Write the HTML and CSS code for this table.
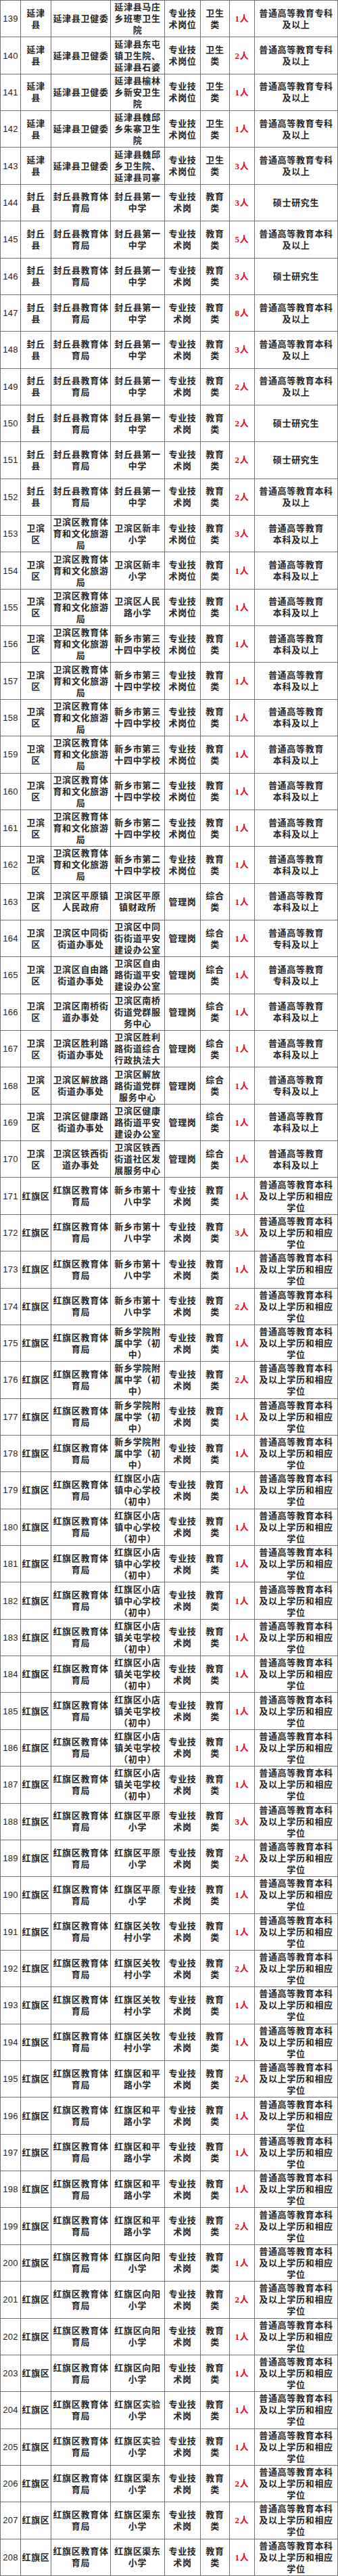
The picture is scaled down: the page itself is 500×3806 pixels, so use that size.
FILE: index.html
```html
<!DOCTYPE html>
<html lang="zh-CN">
<head>
<meta charset="utf-8">
<title>招聘岗位表</title>
<link rel="stylesheet" href="styles.css">
</head>
<body>
<div class="sheet">
<div>139</div><div>延津<br>县</div><div>延津县卫健委</div><div>延津县马庄<br>乡班枣卫生<br>院</div><div>专业技<br>术岗位</div><div>卫生<br>类</div><div>1人</div><div>普通高等教育专科<br>及以上</div>
<div>140</div><div>延津<br>县</div><div>延津县卫健委</div><div>延津县东屯<br>镇卫生院、<br>延津县石婆</div><div>专业技<br>术岗位</div><div>卫生<br>类</div><div>2人</div><div>普通高等教育专科<br>及以上</div>
<div>141</div><div>延津<br>县</div><div>延津县卫健委</div><div>延津县榆林<br>乡新安卫生<br>院</div><div>专业技<br>术岗位</div><div>卫生<br>类</div><div>1人</div><div>普通高等教育专科<br>及以上</div>
<div>142</div><div>延津<br>县</div><div>延津县卫健委</div><div>延津县魏邱<br>乡朱寨卫生<br>院</div><div>专业技<br>术岗位</div><div>卫生<br>类</div><div>1人</div><div>普通高等教育专科<br>及以上</div>
<div>143</div><div>延津<br>县</div><div>延津县卫健委</div><div>延津县魏邱<br>乡卫生院、<br>延津县司寨</div><div>专业技<br>术岗位</div><div>卫生<br>类</div><div>3人</div><div>普通高等教育专科<br>及以上</div>
<div>144</div><div>封丘<br>县</div><div>封丘县教育体<br>育局</div><div>封丘县第一<br>中学</div><div>专业技<br>术岗</div><div>教育<br>类</div><div>3人</div><div>硕士研究生</div>
<div>145</div><div>封丘<br>县</div><div>封丘县教育体<br>育局</div><div>封丘县第一<br>中学</div><div>专业技<br>术岗</div><div>教育<br>类</div><div>5人</div><div>普通高等教育本科<br>及以上</div>
<div>146</div><div>封丘<br>县</div><div>封丘县教育体<br>育局</div><div>封丘县第一<br>中学</div><div>专业技<br>术岗</div><div>教育<br>类</div><div>3人</div><div>硕士研究生</div>
<div>147</div><div>封丘<br>县</div><div>封丘县教育体<br>育局</div><div>封丘县第一<br>中学</div><div>专业技<br>术岗</div><div>教育<br>类</div><div>8人</div><div>普通高等教育本科<br>及以上</div>
<div>148</div><div>封丘<br>县</div><div>封丘县教育体<br>育局</div><div>封丘县第一<br>中学</div><div>专业技<br>术岗</div><div>教育<br>类</div><div>3人</div><div>普通高等教育本科<br>及以上</div>
<div>149</div><div>封丘<br>县</div><div>封丘县教育体<br>育局</div><div>封丘县第一<br>中学</div><div>专业技<br>术岗</div><div>教育<br>类</div><div>2人</div><div>普通高等教育本科<br>及以上</div>
<div>150</div><div>封丘<br>县</div><div>封丘县教育体<br>育局</div><div>封丘县第一<br>中学</div><div>专业技<br>术岗</div><div>教育<br>类</div><div>2人</div><div>硕士研究生</div>
<div>151</div><div>封丘<br>县</div><div>封丘县教育体<br>育局</div><div>封丘县第一<br>中学</div><div>专业技<br>术岗</div><div>教育<br>类</div><div>2人</div><div>硕士研究生</div>
<div>152</div><div>封丘<br>县</div><div>封丘县教育体<br>育局</div><div>封丘县第一<br>中学</div><div>专业技<br>术岗</div><div>教育<br>类</div><div>2人</div><div>普通高等教育本科<br>及以上</div>
<div>153</div><div>卫滨<br>区</div><div>卫滨区教育体<br>育和文化旅游<br>局</div><div>卫滨区新丰<br>小学</div><div>专业技<br>术岗位</div><div>教育<br>类</div><div>3人</div><div>普通高等教育<br>本科及以上</div>
<div>154</div><div>卫滨<br>区</div><div>卫滨区教育体<br>育和文化旅游<br>局</div><div>卫滨区新丰<br>小学</div><div>专业技<br>术岗位</div><div>教育<br>类</div><div>1人</div><div>普通高等教育<br>本科及以上</div>
<div>155</div><div>卫滨<br>区</div><div>卫滨区教育体<br>育和文化旅游<br>局</div><div>卫滨区人民<br>路小学</div><div>专业技<br>术岗位</div><div>教育<br>类</div><div>1人</div><div>普通高等教育<br>本科及以上</div>
<div>156</div><div>卫滨<br>区</div><div>卫滨区教育体<br>育和文化旅游<br>局</div><div>新乡市第三<br>十四中学校</div><div>专业技<br>术岗位</div><div>教育<br>类</div><div>1人</div><div>普通高等教育<br>本科及以上</div>
<div>157</div><div>卫滨<br>区</div><div>卫滨区教育体<br>育和文化旅游<br>局</div><div>新乡市第三<br>十四中学校</div><div>专业技<br>术岗位</div><div>教育<br>类</div><div>1人</div><div>普通高等教育<br>本科及以上</div>
<div>158</div><div>卫滨<br>区</div><div>卫滨区教育体<br>育和文化旅游<br>局</div><div>新乡市第三<br>十四中学校</div><div>专业技<br>术岗位</div><div>教育<br>类</div><div>1人</div><div>普通高等教育<br>本科及以上</div>
<div>159</div><div>卫滨<br>区</div><div>卫滨区教育体<br>育和文化旅游<br>局</div><div>新乡市第三<br>十四中学校</div><div>专业技<br>术岗位</div><div>教育<br>类</div><div>1人</div><div>普通高等教育<br>本科及以上</div>
<div>160</div><div>卫滨<br>区</div><div>卫滨区教育体<br>育和文化旅游<br>局</div><div>新乡市第二<br>十四中学校</div><div>专业技<br>术岗位</div><div>教育<br>类</div><div>1人</div><div>普通高等教育<br>本科及以上</div>
<div>161</div><div>卫滨<br>区</div><div>卫滨区教育体<br>育和文化旅游<br>局</div><div>新乡市第二<br>十四中学校</div><div>专业技<br>术岗位</div><div>教育<br>类</div><div>1人</div><div>普通高等教育<br>本科及以上</div>
<div>162</div><div>卫滨<br>区</div><div>卫滨区教育体<br>育和文化旅游<br>局</div><div>新乡市第二<br>十四中学校</div><div>专业技<br>术岗位</div><div>教育<br>类</div><div>1人</div><div>普通高等教育<br>本科及以上</div>
<div>163</div><div>卫滨<br>区</div><div>卫滨区平原镇<br>人民政府</div><div>卫滨区平原<br>镇财政所</div><div>管理岗</div><div>综合<br>类</div><div>1人</div><div>普通高等教育<br>本科及以上</div>
<div>164</div><div>卫滨<br>区</div><div>卫滨区中同街<br>街道办事处</div><div>卫滨区中同<br>街街道平安<br>建设办公室</div><div>管理岗</div><div>综合<br>类</div><div>1人</div><div>普通高等教育<br>专科及以上</div>
<div>165</div><div>卫滨<br>区</div><div>卫滨区自由路<br>街道办事处</div><div>卫滨区自由<br>路街道平安<br>建设办公室</div><div>管理岗</div><div>综合<br>类</div><div>1人</div><div>普通高等教育<br>专科及以上</div>
<div>166</div><div>卫滨<br>区</div><div>卫滨区南桥街<br>道办事处</div><div>卫滨区南桥<br>街道党群服<br>务中心</div><div>管理岗</div><div>综合<br>类</div><div>1人</div><div>普通高等教育<br>本科及以上</div>
<div>167</div><div>卫滨<br>区</div><div>卫滨区胜利路<br>街道办事处</div><div>卫滨区胜利<br>路街道综合<br>行政执法大</div><div>管理岗</div><div>综合<br>类</div><div>1人</div><div>普通高等教育<br>本科及以上</div>
<div>168</div><div>卫滨<br>区</div><div>卫滨区解放路<br>街道办事处</div><div>卫滨区解放<br>路街道党群<br>服务中心</div><div>管理岗</div><div>综合<br>类</div><div>1人</div><div>普通高等教育<br>专科及以上</div>
<div>169</div><div>卫滨<br>区</div><div>卫滨区健康路<br>街道办事处</div><div>卫滨区健康<br>路街道平安<br>建设办公室</div><div>管理岗</div><div>综合<br>类</div><div>1人</div><div>普通高等教育<br>本科及以上</div>
<div>170</div><div>卫滨<br>区</div><div>卫滨区铁西街<br>道办事处</div><div>卫滨区铁西<br>街道社区发<br>展服务中心</div><div>管理岗</div><div>综合<br>类</div><div>1人</div><div>普通高等教育<br>本科及以上</div>
<div>171</div><div>红旗区</div><div>红旗区教育体<br>育局</div><div>新乡市第十<br>八中学</div><div>专业技<br>术岗</div><div>教育<br>类</div><div>1人</div><div>普通高等教育本科<br>及以上学历和相应<br>学位</div>
<div>172</div><div>红旗区</div><div>红旗区教育体<br>育局</div><div>新乡市第十<br>八中学</div><div>专业技<br>术岗</div><div>教育<br>类</div><div>3人</div><div>普通高等教育本科<br>及以上学历和相应<br>学位</div>
<div>173</div><div>红旗区</div><div>红旗区教育体<br>育局</div><div>新乡市第十<br>八中学</div><div>专业技<br>术岗</div><div>教育<br>类</div><div>1人</div><div>普通高等教育本科<br>及以上学历和相应<br>学位</div>
<div>174</div><div>红旗区</div><div>红旗区教育体<br>育局</div><div>新乡市第十<br>八中学</div><div>专业技<br>术岗</div><div>教育<br>类</div><div>2人</div><div>普通高等教育本科<br>及以上学历和相应<br>学位</div>
<div>175</div><div>红旗区</div><div>红旗区教育体<br>育局</div><div>新乡学院附<br>属中学（初<br>中）</div><div>专业技<br>术岗</div><div>教育<br>类</div><div>1人</div><div>普通高等教育本科<br>及以上学历和相应<br>学位</div>
<div>176</div><div>红旗区</div><div>红旗区教育体<br>育局</div><div>新乡学院附<br>属中学（初<br>中）</div><div>专业技<br>术岗</div><div>教育<br>类</div><div>2人</div><div>普通高等教育本科<br>及以上学历和相应<br>学位</div>
<div>177</div><div>红旗区</div><div>红旗区教育体<br>育局</div><div>新乡学院附<br>属中学（初<br>中）</div><div>专业技<br>术岗</div><div>教育<br>类</div><div>1人</div><div>普通高等教育本科<br>及以上学历和相应<br>学位</div>
<div>178</div><div>红旗区</div><div>红旗区教育体<br>育局</div><div>新乡学院附<br>属中学（初<br>中）</div><div>专业技<br>术岗</div><div>教育<br>类</div><div>1人</div><div>普通高等教育本科<br>及以上学历和相应<br>学位</div>
<div>179</div><div>红旗区</div><div>红旗区教育体<br>育局</div><div>红旗区小店<br>镇中心学校<br>（初中）</div><div>专业技<br>术岗</div><div>教育<br>类</div><div>1人</div><div>普通高等教育本科<br>及以上学历和相应<br>学位</div>
<div>180</div><div>红旗区</div><div>红旗区教育体<br>育局</div><div>红旗区小店<br>镇中心学校<br>（初中）</div><div>专业技<br>术岗</div><div>教育<br>类</div><div>1人</div><div>普通高等教育本科<br>及以上学历和相应<br>学位</div>
<div>181</div><div>红旗区</div><div>红旗区教育体<br>育局</div><div>红旗区小店<br>镇中心学校<br>（初中）</div><div>专业技<br>术岗</div><div>教育<br>类</div><div>1人</div><div>普通高等教育本科<br>及以上学历和相应<br>学位</div>
<div>182</div><div>红旗区</div><div>红旗区教育体<br>育局</div><div>红旗区小店<br>镇中心学校<br>（初中）</div><div>专业技<br>术岗</div><div>教育<br>类</div><div>1人</div><div>普通高等教育本科<br>及以上学历和相应<br>学位</div>
<div>183</div><div>红旗区</div><div>红旗区教育体<br>育局</div><div>红旗区小店<br>镇关屯学校<br>（初中）</div><div>专业技<br>术岗</div><div>教育<br>类</div><div>1人</div><div>普通高等教育本科<br>及以上学历和相应<br>学位</div>
<div>184</div><div>红旗区</div><div>红旗区教育体<br>育局</div><div>红旗区小店<br>镇关屯学校<br>（初中）</div><div>专业技<br>术岗</div><div>教育<br>类</div><div>1人</div><div>普通高等教育本科<br>及以上学历和相应<br>学位</div>
<div>185</div><div>红旗区</div><div>红旗区教育体<br>育局</div><div>红旗区小店<br>镇关屯学校<br>（初中）</div><div>专业技<br>术岗</div><div>教育<br>类</div><div>1人</div><div>普通高等教育本科<br>及以上学历和相应<br>学位</div>
<div>186</div><div>红旗区</div><div>红旗区教育体<br>育局</div><div>红旗区小店<br>镇关屯学校<br>（初中）</div><div>专业技<br>术岗</div><div>教育<br>类</div><div>1人</div><div>普通高等教育本科<br>及以上学历和相应<br>学位</div>
<div>187</div><div>红旗区</div><div>红旗区教育体<br>育局</div><div>红旗区小店<br>镇关屯学校<br>（初中）</div><div>专业技<br>术岗</div><div>教育<br>类</div><div>1人</div><div>普通高等教育本科<br>及以上学历和相应<br>学位</div>
<div>188</div><div>红旗区</div><div>红旗区教育体<br>育局</div><div>红旗区平原<br>小学</div><div>专业技<br>术岗</div><div>教育<br>类</div><div>3人</div><div>普通高等教育本科<br>及以上学历和相应<br>学位</div>
<div>189</div><div>红旗区</div><div>红旗区教育体<br>育局</div><div>红旗区平原<br>小学</div><div>专业技<br>术岗</div><div>教育<br>类</div><div>2人</div><div>普通高等教育本科<br>及以上学历和相应<br>学位</div>
<div>190</div><div>红旗区</div><div>红旗区教育体<br>育局</div><div>红旗区平原<br>小学</div><div>专业技<br>术岗</div><div>教育<br>类</div><div>1人</div><div>普通高等教育本科<br>及以上学历和相应<br>学位</div>
<div>191</div><div>红旗区</div><div>红旗区教育体<br>育局</div><div>红旗区关牧<br>村小学</div><div>专业技<br>术岗</div><div>教育<br>类</div><div>1人</div><div>普通高等教育本科<br>及以上学历和相应<br>学位</div>
<div>192</div><div>红旗区</div><div>红旗区教育体<br>育局</div><div>红旗区关牧<br>村小学</div><div>专业技<br>术岗</div><div>教育<br>类</div><div>2人</div><div>普通高等教育本科<br>及以上学历和相应<br>学位</div>
<div>193</div><div>红旗区</div><div>红旗区教育体<br>育局</div><div>红旗区关牧<br>村小学</div><div>专业技<br>术岗</div><div>教育<br>类</div><div>1人</div><div>普通高等教育本科<br>及以上学历和相应<br>学位</div>
<div>194</div><div>红旗区</div><div>红旗区教育体<br>育局</div><div>红旗区关牧<br>村小学</div><div>专业技<br>术岗</div><div>教育<br>类</div><div>1人</div><div>普通高等教育本科<br>及以上学历和相应<br>学位</div>
<div>195</div><div>红旗区</div><div>红旗区教育体<br>育局</div><div>红旗区和平<br>路小学</div><div>专业技<br>术岗</div><div>教育<br>类</div><div>2人</div><div>普通高等教育本科<br>及以上学历和相应<br>学位</div>
<div>196</div><div>红旗区</div><div>红旗区教育体<br>育局</div><div>红旗区和平<br>路小学</div><div>专业技<br>术岗</div><div>教育<br>类</div><div>1人</div><div>普通高等教育本科<br>及以上学历和相应<br>学位</div>
<div>197</div><div>红旗区</div><div>红旗区教育体<br>育局</div><div>红旗区和平<br>路小学</div><div>专业技<br>术岗</div><div>教育<br>类</div><div>1人</div><div>普通高等教育本科<br>及以上学历和相应<br>学位</div>
<div>198</div><div>红旗区</div><div>红旗区教育体<br>育局</div><div>红旗区和平<br>路小学</div><div>专业技<br>术岗</div><div>教育<br>类</div><div>1人</div><div>普通高等教育本科<br>及以上学历和相应<br>学位</div>
<div>199</div><div>红旗区</div><div>红旗区教育体<br>育局</div><div>红旗区和平<br>路小学</div><div>专业技<br>术岗</div><div>教育<br>类</div><div>2人</div><div>普通高等教育本科<br>及以上学历和相应<br>学位</div>
<div>200</div><div>红旗区</div><div>红旗区教育体<br>育局</div><div>红旗区向阳<br>小学</div><div>专业技<br>术岗</div><div>教育<br>类</div><div>1人</div><div>普通高等教育本科<br>及以上学历和相应<br>学位</div>
<div>201</div><div>红旗区</div><div>红旗区教育体<br>育局</div><div>红旗区向阳<br>小学</div><div>专业技<br>术岗</div><div>教育<br>类</div><div>2人</div><div>普通高等教育本科<br>及以上学历和相应<br>学位</div>
<div>202</div><div>红旗区</div><div>红旗区教育体<br>育局</div><div>红旗区向阳<br>小学</div><div>专业技<br>术岗</div><div>教育<br>类</div><div>1人</div><div>普通高等教育本科<br>及以上学历和相应<br>学位</div>
<div>203</div><div>红旗区</div><div>红旗区教育体<br>育局</div><div>红旗区向阳<br>小学</div><div>专业技<br>术岗</div><div>教育<br>类</div><div>1人</div><div>普通高等教育本科<br>及以上学历和相应<br>学位</div>
<div>204</div><div>红旗区</div><div>红旗区教育体<br>育局</div><div>红旗区实验<br>小学</div><div>专业技<br>术岗</div><div>教育<br>类</div><div>1人</div><div>普通高等教育本科<br>及以上学历和相应<br>学位</div>
<div>205</div><div>红旗区</div><div>红旗区教育体<br>育局</div><div>红旗区实验<br>小学</div><div>专业技<br>术岗</div><div>教育<br>类</div><div>1人</div><div>普通高等教育本科<br>及以上学历和相应<br>学位</div>
<div>206</div><div>红旗区</div><div>红旗区教育体<br>育局</div><div>红旗区渠东<br>小学</div><div>专业技<br>术岗</div><div>教育<br>类</div><div>2人</div><div>普通高等教育本科<br>及以上学历和相应<br>学位</div>
<div>207</div><div>红旗区</div><div>红旗区教育体<br>育局</div><div>红旗区渠东<br>小学</div><div>专业技<br>术岗</div><div>教育<br>类</div><div>2人</div><div>普通高等教育本科<br>及以上学历和相应<br>学位</div>
<div>208</div><div>红旗区</div><div>红旗区教育体<br>育局</div><div>红旗区渠东<br>小学</div><div>专业技<br>术岗</div><div>教育<br>类</div><div>1人</div><div>普通高等教育本科<br>及以上学历和相应<br>学位</div>
</div>
</body>
</html>
```
FILE: styles.css
```css
html, body {
  margin: 0;
  padding: 0;
  background: #ffffff;
}

.sheet {
  width: 500px;
  height: 3806px;
  box-sizing: border-box;
  display: grid;
  grid-template-columns: 29px 44px 87px 79px 52px 42px 36px 122px;
  grid-template-rows: repeat(70, 1fr);
  gap: 1px;
  padding: 1px;
  background: #707070;
}

.sheet > div {
  background: #ffffff;
  display: flex;
  align-items: center;
  justify-content: center;
  text-align: center;
  overflow: hidden;
  white-space: nowrap;
  font-family: "Liberation Serif", "Noto Sans CJK SC", serif;
  font-weight: 700;
  font-size: 13px;
  line-height: 17px;
  letter-spacing: 0.7px;
  color: #262626;
}

.sheet > div:nth-child(8n+1) {
  font-family: "Liberation Sans", "Noto Sans CJK SC", sans-serif;
  font-size: 13px;
  letter-spacing: 0.3px;
  font-weight: 400;
  color: #222222;
}

.sheet > div:nth-child(8n+7) {
  color: #d8121b;
  font-weight: 700;
}
```
